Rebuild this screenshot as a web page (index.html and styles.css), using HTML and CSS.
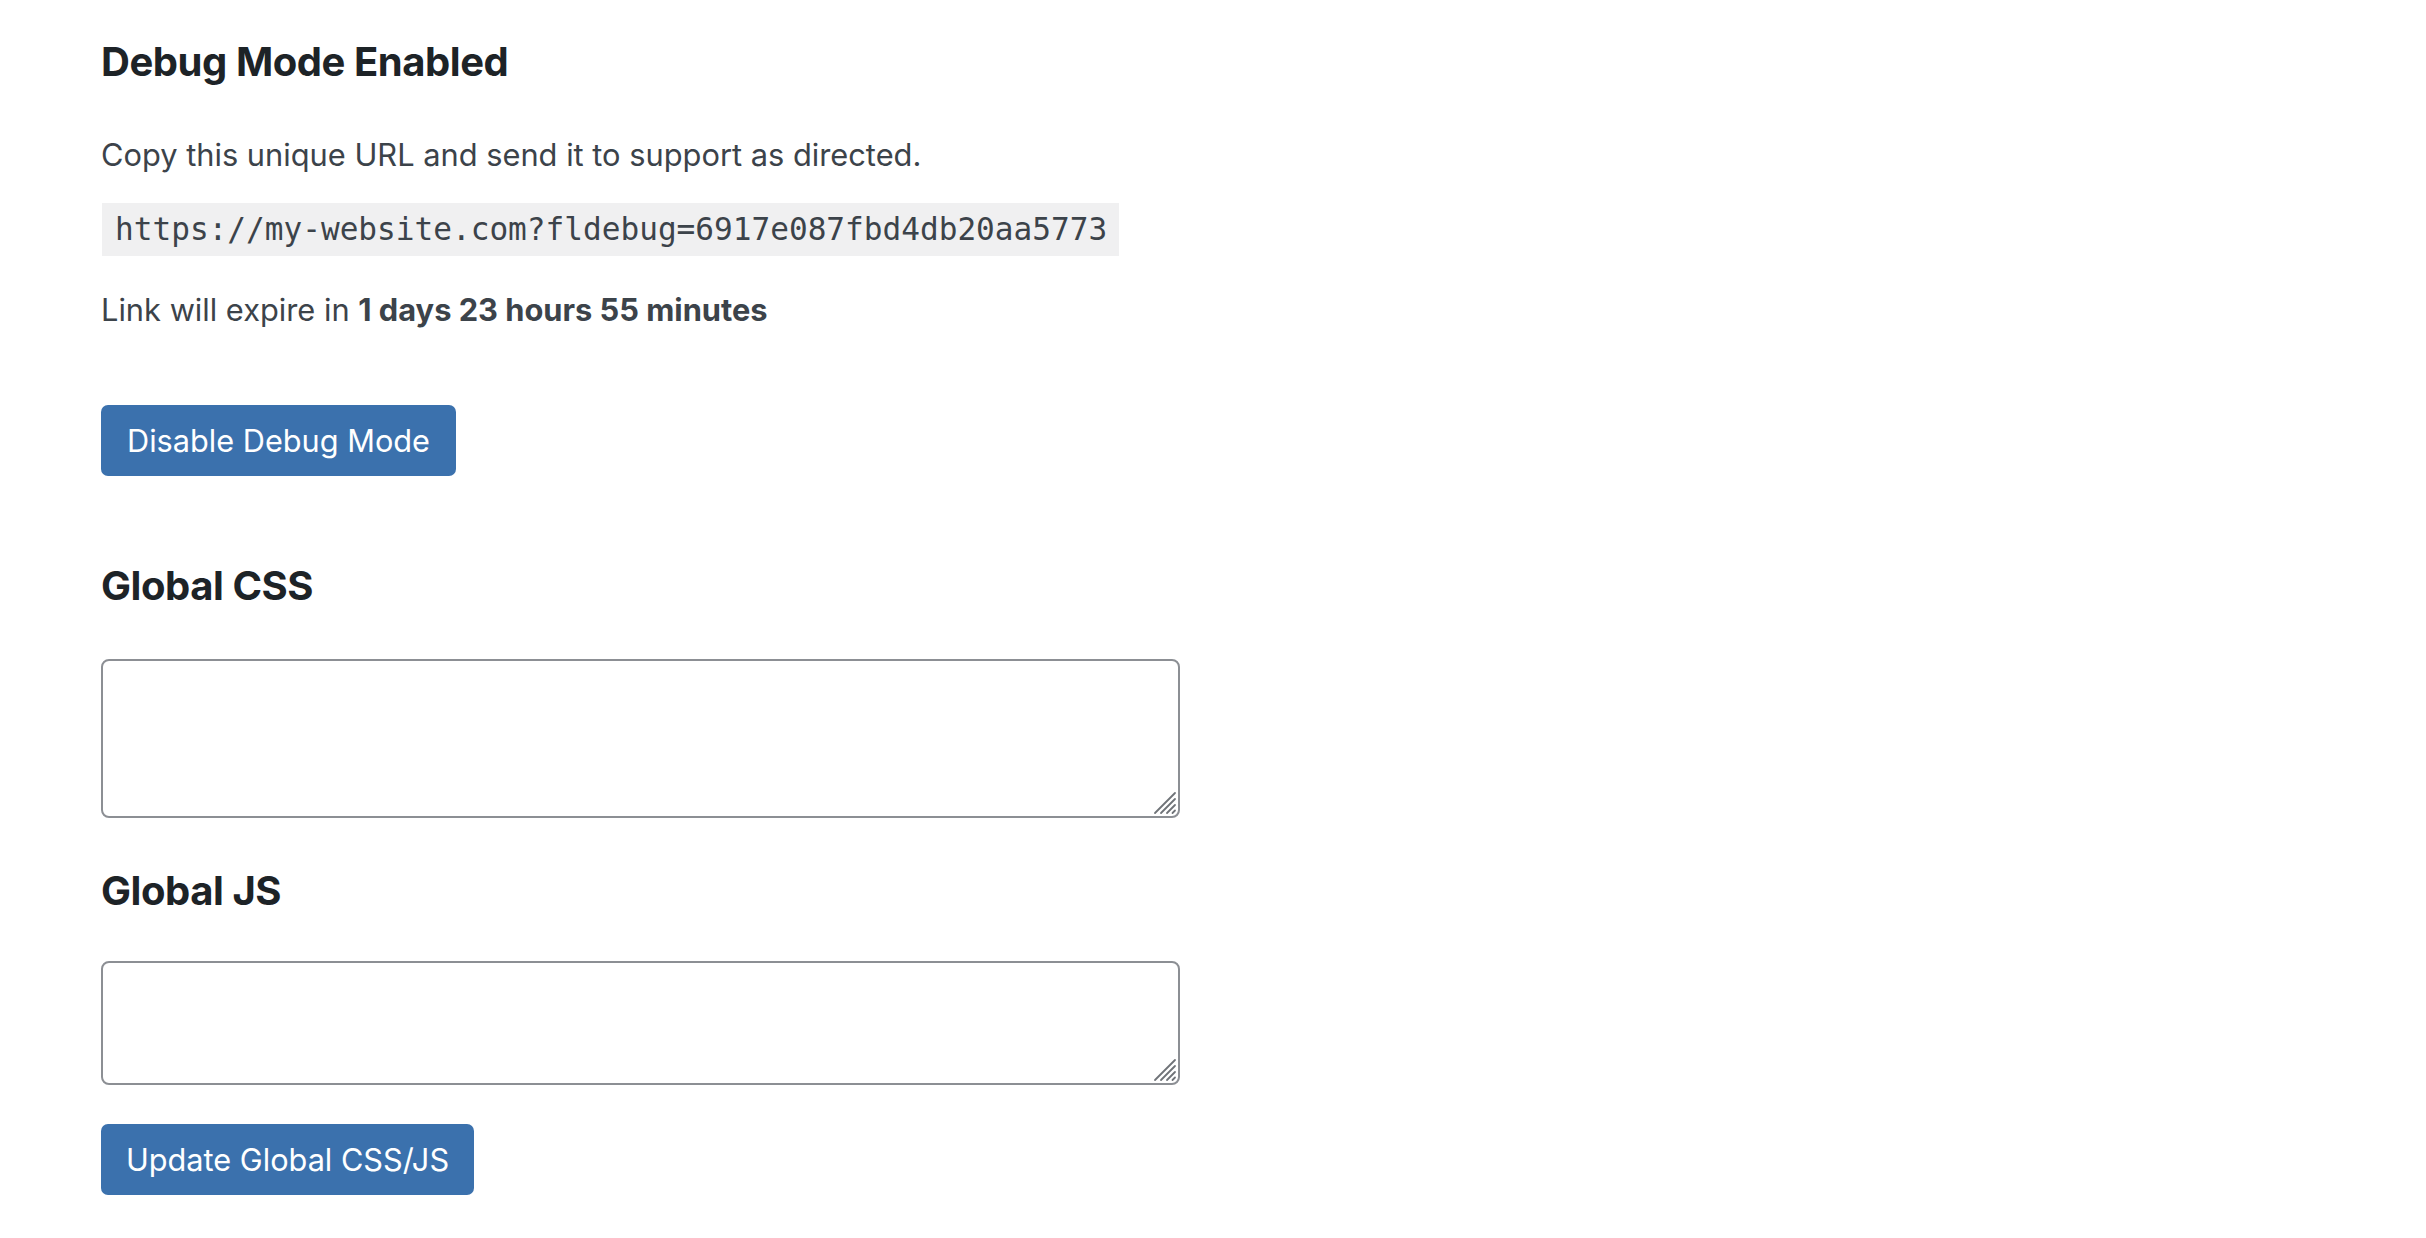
FILE: index.html
```html
<!DOCTYPE html>
<html lang="en">
<head>
<meta charset="utf-8">
<title>Debug Mode</title>
<link rel="stylesheet" href="styles.css">
</head>
<body>
<div class="wrap">
  <h2 class="title first">Debug Mode Enabled</h2>
  <p class="text intro">Copy this unique URL and send it to support as directed.</p>
  <div class="code-row"><code class="url">https://my-website.com?fldebug=6917e087fbd4db20aa5773</code></div>
  <p class="text expire">Link will expire in <strong>1 days 23 hours 55 minutes</strong></p>
  <button class="btn btn-disable" type="button">Disable Debug Mode</button>
  <h2 class="title css-title">Global CSS</h2>
  <div class="field-wrap field-wrap-css">
    <textarea class="field field-css"></textarea>
    <svg class="grip" width="24" height="24" viewBox="0 0 24 24" aria-hidden="true">
      <path d="M22 2 L2 22 M22 8 L8 22 M22 14 L14 22 M22 19.5 L19.5 22" stroke="#6f7378" stroke-width="1.8" stroke-linecap="round" fill="none"/>
    </svg>
  </div>
  <h2 class="title js-title">Global JS</h2>
  <div class="field-wrap field-wrap-js">
    <textarea class="field field-js"></textarea>
    <svg class="grip" width="24" height="24" viewBox="0 0 24 24" aria-hidden="true">
      <path d="M22 2 L2 22 M22 8 L8 22 M22 14 L14 22 M22 19.5 L19.5 22" stroke="#6f7378" stroke-width="1.8" stroke-linecap="round" fill="none"/>
    </svg>
  </div>
  <button class="btn btn-update" type="button">Update Global CSS/JS</button>
</div>
</body>
</html>
```

FILE: styles.css
```css
html, body {
  margin: 0;
  padding: 0;
  background: #ffffff;
}

body {
  font-family: Inter, "Noto Sans", "Liberation Sans", sans-serif;
  color: #3c434a;
}

.wrap {
  display: flex;
  flex-direction: column;
  align-items: flex-start;
  padding: 0 0 0 101px;
}

.title {
  margin: 0;
  font-size: 40px;
  line-height: 50px;
  font-weight: 700;
  color: #1d2327;
  letter-spacing: -0.45px;
}

.first {
  margin-top: 37px;
}

.text {
  margin: 0;
  font-size: 30.8px;
  line-height: 40px;
}

.text strong {
  font-weight: 700;
}

.intro {
  margin-top: 48px;
}

.code-row {
  margin-top: 28px;
}

.url {
  display: inline-block;
  background: #f0f0f1;
  font-family: "DejaVu Sans Mono", "Liberation Mono", monospace;
  font-size: 31.1px;
  line-height: 53px;
  height: 53px;
  padding: 0 12px 0 13px;
  margin-left: 1px;
  color: #3c434a;
}

.expire {
  margin-top: 34px;
}

.btn {
  font-family: inherit;
  font-size: 30.7px;
  color: #ffffff;
  background: #3b71ad;
  border: none;
  border-radius: 7px;
  height: 71px;
  padding: 0;
  text-align: center;
  cursor: pointer;
}

.btn-disable {
  margin-top: 75px;
  width: 355px;
}

.css-title {
  margin-top: 85px;
}

.field-wrap {
  position: relative;
  margin-top: 48px;
  display: flex;
}

.field {
  box-sizing: border-box;
  width: 1079px;
  border: 2px solid #8c8f94;
  border-radius: 8px;
  background: #ffffff;
  margin: 0;
  resize: none;
}

.grip {
  position: absolute;
  right: 3px;
  bottom: 3px;
}

.field-css {
  height: 159px;
}

.js-title {
  margin-top: 48px;
}

.field-wrap-js {
  margin-top: 45px;
}

.field-js {
  height: 124px;
}

.btn-update {
  margin-top: 39px;
  width: 373px;
}
```
